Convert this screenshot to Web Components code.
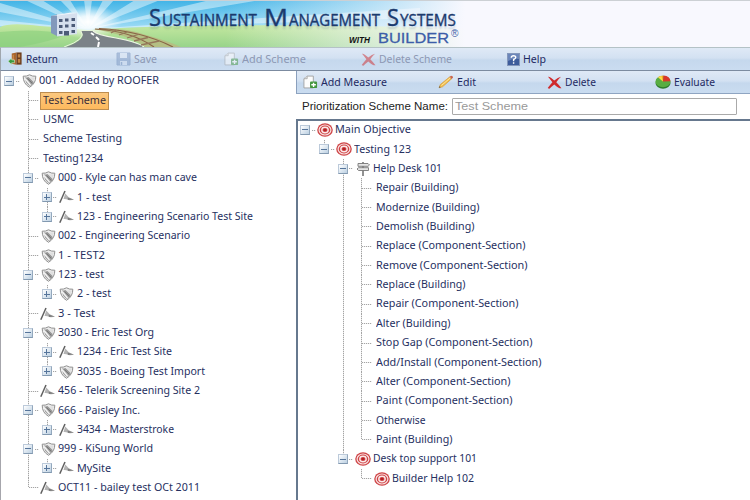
<!DOCTYPE html>
<html lang="en">
<head>
<meta charset="utf-8">
<title>Sustainment Management Systems</title>
<style>
html,body{margin:0;height:100%;overflow:hidden}
body{background:#fff;font-family:"Noto Sans","Open Sans",sans-serif;color:#26305f}
sms-app{--rh:19.37px}
</style>
</head>
<body>
<sms-app></sms-app>
<script>
const def=(name,html,init)=>customElements.define(name,class extends HTMLElement{
  connectedCallback(){
    if(this.shadowRoot)return;
    const t=document.createElement('template');
    t.innerHTML=typeof html==='function'?html(this):html;
    this.attachShadow({mode:'open'}).append(t.content.cloneNode(true));
    if(init)init(this);
  }
});

/* Single-line text scaled horizontally to the width given in w */
def('fit-text','<style>:host{display:block;white-space:pre;line-height:1.3}span{display:inline-block;transform-origin:0 50%}</style><span></span>',el=>{
  const s=el.shadowRoot.querySelector('span');
  s.textContent=el.getAttribute('t');
  const w=+el.getAttribute('w');
  el.style.width=w+'px';
  s.style.transform=`scaleX(${w/s.getBoundingClientRect().width})`;
});

const ICONS={
shield:'<svg width="15" height="14" viewBox="0 0 15 14"><path d="M1.2 2.2Q4.5 2.6 7.5.8Q10.5 2.6 13.8 2.2Q14 9.5 7.5 13.3Q1 9.5 1.2 2.2Z" fill="#ececec" stroke="#909090"/><path d="M3 3.600Q5 3.600 6.500 3L12 8.300Q10 11 7.500 12Q6 10.500 4 8.500Z" fill="#999"/><path d="M3 4.500L8.500 11" stroke="#f4f4f4" stroke-width="1.600"/><path d="M8 3.500L12 7.300L12.600 3.500Z" fill="#dedede"/><path d="M5.500 4.500L10.500 9.500" stroke="#777"/></svg>',
flag:'<svg width="16" height="14" viewBox="0 0 16 14"><path d="M6 1L.8 12.8" stroke="#606060" stroke-width="1.500"/><path d="M6.200 3.500Q8 5 9.500 7Q12 8.500 15 9.500Q12 10.800 9.500 10Q7 8.800 4.500 9Z" fill="#b4b4b4"/><path d="M8.500 7.500L14.800 9.600L9 9.900Z" fill="#7c7c7c"/></svg>',
target:'<svg width="16" height="14" viewBox="0 0 16 14"><ellipse cx="8" cy="7" rx="7.800" ry="6.800" fill="#cf4446"/><ellipse cx="8" cy="7" rx="5.900" ry="5" fill="none" stroke="#f8e2e2" stroke-width="1.200"/><ellipse cx="8" cy="7" rx="3.200" ry="2.700" fill="none" stroke="#fbeaea" stroke-width="1.400"/><ellipse cx="8" cy="7" rx="1.500" ry="1.300" fill="#b32226"/></svg>',
sign:'<svg width="14" height="14" viewBox="0 0 14 14"><path d="M7 0V14" stroke="#777" stroke-width="1.600"/><path d="M2 1.500H12L13.500 3L12 4.300H2ZM2.500 5.700H12.500V8.500H2.500L1 7Z" fill="#e6e6e6" stroke="#777" stroke-width=".9"/></svg>',
door:'<svg width="15" height="14" viewBox="0 0 16 14"><path d="M4 1L9 0V13L4 12Z" fill="#a9652c"/><path d="M9 0H14.500V13H9Z" fill="#6d3d1d"/><path d="M10.500 2H13V5.500H10.500ZM10.500 7H13V11H10.500Z" fill="#c18343"/><path d="M5.500 2.500V10.500" stroke="#d99a5a"/><path d="M0 9.500L4 6V8H7V11H4V13Z" fill="#3b9a3e" stroke="#e2f1df" stroke-width=".6"/></svg>',
save:'<svg width="15" height="14" viewBox="0 0 15 14"><path d="M1 1H14V13H1Z" fill="#7f9ac4" stroke="#6f8cba"/><path d="M4 1H11V6H4Z" fill="#dde7f4"/><path d="M4 9H11V13H4Z" fill="#d2def0"/><path d="M5.500 10V13" stroke="#6f8cba" stroke-width="1.500"/></svg>',
add:'<svg width="15" height="14" viewBox="0 0 16 14"><path d="M1 3.500L4.500.7H11V13.300H1Z" fill="#fcfcfc" stroke="#9a9a9a" stroke-width=".9"/><path d="M1 3.500H4.500V.7" fill="#ddd" stroke="#9a9a9a" stroke-width=".7"/><rect x="7.500" y="6.500" width="7.500" height="7" rx="1" fill="#43963e"/><path d="M11.250 7.800V12.300M8.800 10H13.700" stroke="#fff" stroke-width="1.500"/></svg>',
x:'<svg width="15" height="13" viewBox="0 0 15 13"><path d="M1 .8Q3 .4 7.3 4.600Q11 1.200 14 .8Q12 2.5 9.300 6.3Q12 9 14.500 12.300Q12 12.800 7.3 8.400Q4.500 10.5 2.500 12.800Q1.500 12.800 .7 12Q3 9 5.400 6.300Q3 3 1 .8Z" fill="#cf2a2c"/></svg>',
help:'<svg width="13" height="13" viewBox="0 0 13 13"><rect x=".5" y=".5" width="12" height="12" fill="#3d5c9b" stroke="#8497bb"/><path d="M1 1H12V6Q6 5 1 8Z" fill="#7f98c7" opacity=".7"/><path d="M4.300 4.700Q4.300 2.800 6.500 2.800Q8.900 2.800 8.700 4.700Q8.500 5.700 6.600 6.500V8.200M6.600 9.300V10.700" fill="none" stroke="#fff" stroke-width="1.400"/></svg>',
pencil:'<svg width="16" height="14" viewBox="0 0 16 14"><path d="M1 12.800L2.300 9.500L11.500 2L13.500 3.900L4.500 11.800Z" fill="#f2bf4b" stroke="#cf9236" stroke-width=".6"/><path d="M11.500 2L13 .8Q15.3.8 15 2.700L13.500 3.900Z" fill="#c8664d"/><path d="M3.400 10.500L12.300 2.900" stroke="#fbe3a0"/><path d="M1 12.800L1.600 11.200L2.700 12.200Z" fill="#444"/></svg>',
pie:'<svg width="16" height="14" viewBox="0 0 16 14"><ellipse cx="8" cy="8" rx="7.500" ry="5.700" fill="#2d7c2c"/><ellipse cx="8" cy="6.500" rx="7.500" ry="5.700" fill="#58ad42"/><path d="M8 6.500L3.300 2Q5.500.5 8.500.8Z" fill="#f4a51e"/><path d="M8 6.500L8.500.4Q15 1 15.500 6.300Z" fill="#d9362c"/><path d="M8 6.500L3 2.200Q4.800 1 6.500.9Z" fill="#f7dd4c"/></svg>'
};
def('ui-icon',el=>`<style>:host{display:flex;flex:none}svg{display:block}</style>${ICONS[el.getAttribute('name')]}`);

/* Branch of a tree: rail column with dotted connectors, optional toggle and icon, nested nodes in the slot */
def('tree-node',el=>{
  const tg=el.getAttribute('toggle'),ic=el.getAttribute('icon'),sel=el.hasAttribute('selected');
  return `<style>
  :host{display:grid;grid-template-columns:18.8px minmax(0,1fr);font-size:10.6px}
  .rail{grid-row:1/3;grid-column:1;display:flex;justify-content:center;padding-top:4.5px;box-sizing:border-box;
    background:repeating-linear-gradient(#a4a4a4 0 1px,#e6e6e6 1px 2px) 9px 0/1px 100% no-repeat}
  :host([last]) .rail{background-size:1px 9px}
  :host([root]) .rail{background:none}
  .box{width:10px;height:10px;box-sizing:border-box;border:1px solid #bccada;border-right-color:#93a8bd;border-bottom-color:#8299b0;background:linear-gradient(135deg,#fff,#bcd0e2);display:grid;place-items:center}
  .box i{grid-area:1/1;width:6px;height:1px;background:#56759b}.box i+i{width:1px;height:6px}
  .row{height:var(--rh);display:flex;align-items:center;margin-left:-9px}
  .h{flex:none;width:${tg?4:10}px;margin-left:${tg?6:0}px;height:1px;background:repeating-linear-gradient(90deg,#a4a4a4 0 1px,#eee 1px 2px)}
  .ic{width:19px;display:flex;justify-content:center;flex:none}
  .l{padding:1px 2px;border:1px solid transparent;margin-left:${ic?-2.5:1.3}px}
  .sel{background:linear-gradient(#fbc880,#fdb95d);border-color:#bd8d50;color:#3c3039}
  .kids{grid-column:2}
  </style><div class="rail">${tg?`<span class="box"><i></i>${tg==='+'?'<i></i>':''}</span>`:''}</div>
  <div class="row"><span class="h"></span>${ic?`<span class="ic"><ui-icon name="${ic}"></ui-icon></span>`:''}<div class="l ${sel?'sel':''}"><fit-text t="${el.getAttribute('t')}" w="${el.getAttribute('w')}"></fit-text></div></div>
  <div class="kids"><slot></slot></div>`;
});

def('tool-button',el=>`<style>
:host{display:flex;align-items:center;gap:3px;font-size:10.8px;color:#1f2a62}
:host([off]){color:#8d98b4}
:host([off]) ui-icon{opacity:.5}
</style><ui-icon name="${el.getAttribute('icon')}"></ui-icon><fit-text t="${el.getAttribute('t')}" w="${el.getAttribute('w')}"></fit-text>`);

def('tool-bar',`<style>:host{display:grid;align-items:center;box-sizing:border-box;background:linear-gradient(#dfe9f6,#d3e1f2 45%,#c5d8ed 55%,#cadcf0)}</style><slot></slot>`);

def('page-banner',`<style>
:host{display:grid;height:47px;overflow:hidden;background:#f8f8fe}
svg,.t{grid-area:1/1}
svg{display:block}
.t{display:flex;flex-direction:column;align-items:flex-start;padding:4px 0 0 149px;color:#1b3a6e;font-family:"Open Sans","Noto Sans",sans-serif}
.a{display:flex;align-items:baseline;height:26px;gap:7px;font-size:16px;-webkit-text-stroke:.35px #1b3a6e}
.a div{display:flex;align-items:baseline;gap:1px;text-shadow:0 3px 2px #1b3a6e30}
.a fit-text{line-height:17px}
.a .c{font-size:24px;line-height:26px}
.b{display:flex;align-items:baseline;padding-left:200px;gap:8px}
.w{font:italic bold 8.500px "Liberation Sans",sans-serif;color:#111}
.bu{font:15.500px "Liberation Sans",sans-serif;color:#3c5da8;line-height:16px;-webkit-text-stroke:.3px #3c5da8}
.r{font:10px/10px "Liberation Sans",sans-serif;color:#3c5da8;align-self:flex-start;margin-left:-6px;margin-top:-1px}
</style>
<svg width="750" height="47" viewBox="0 0 750 47">
<defs>
<linearGradient id="sky" x2="0" y2="1"><stop stop-color="#3fb3e6"/><stop offset=".6" stop-color="#9fdcf5"/><stop offset="1" stop-color="#e2f5fb"/></linearGradient>
<linearGradient id="gr" x2="0" y2="1"><stop stop-color="#c5e8a0"/><stop offset="1" stop-color="#98d48a"/></linearGradient>
<linearGradient id="fade"><stop offset=".3" stop-color="#f8f8fe" stop-opacity="0"/><stop offset=".62" stop-color="#f8f8fe"/></linearGradient>
<radialGradient id="glow"><stop stop-color="#fff"/><stop offset=".35" stop-color="#fff" stop-opacity=".85"/><stop offset="1" stop-color="#fff" stop-opacity="0"/></radialGradient>
</defs>
<rect width="750" height="47" fill="url(#sky)"/>
<g fill="#fff" opacity=".45"><path d="M88 29L0 3V12ZM88 29L0 20V26ZM88 29L25 0H42ZM88 29L60 0H70ZM88 29L84 0H92ZM88 29L103 0H114ZM88 29L135 0H160ZM88 29L210 0H260ZM88 29L420 8V18Z"/></g>
<path d="M0 27Q10 22 40 26Q60 27 88 30Q200 21 500 29V47H0Z" fill="url(#gr)"/>
<ellipse cx="88" cy="22" rx="34" ry="17" fill="url(#glow)"/>
<path d="M0 32Q35 28 68 34Q50 42 20 47H0Z" fill="#88cf7c" opacity=".6"/>
<path d="M81 31H93Q98 35 116 38Q138 42 143 47H66Q88 39 81 31Z" fill="#7b8288"/>
<path d="M81 31Q87 39 64 47" fill="none" stroke="#e9f3dc"/><path d="M93 31Q97 35 116 38Q138 42 144 47" fill="none" stroke="#eef5e4" stroke-width="1.200"/>
<path d="M91 33L94 35M96 37L99 40M99 42L98 47" stroke="#fff" stroke-width="2"/>
<path d="M93 29Q123 27 146 35Q168 41 181 47H145Q133 36 93 29Z" fill="#b4bf83"/>
<path d="M95 29Q131 31 154 47M99 28.500Q142 31 173 47" fill="none" stroke="#8a6446" stroke-width="1.200"/>
<path d="M111 33L116 30M119 35L127 32M127 38L138 34.500M134 41L148 37.500M141 45L159 41" stroke="#94775a" stroke-width="1.300"/>
<path d="M51 16L57 14.500V36L51 33Z" fill="#8299bb"/><path d="M57 14.500L77 13V34L57 36.500Z" fill="#d6e0ee"/><path d="M51 16L71 12.500L77 13L57 15.500Z" fill="#f3f7fb"/>
<g fill="#4c5b78"><path d="M59 19h3.500v3H59zM65 18.500h3.500v3H65zM71.500 18h3.500v3h-3.500zM59 25h3.500v3H59zM65 24.500h3.500v3H65zM71.500 24h3.500v3h-3.500zM59 31h3.500v3H59zM64 31h5v4.500h-5zM71.500 30h3.500v3h-3.500z"/></g>
<rect width="750" height="47" fill="url(#fade)"/>
<rect width="750" height="1" fill="#ccd0d4"/>
</svg>
<div class="t"><div class="a"><div><fit-text class="c" t="S" w="12"></fit-text><fit-text t="USTAINMENT" w="95"></fit-text></div><div><fit-text class="c" t="M" w="24"></fit-text><fit-text t="ANAGEMENT" w="91"></fit-text></div><div><fit-text class="c" t="S" w="12"></fit-text><fit-text t="YSTEMS" w="56"></fit-text></div></div>
<div class="b"><fit-text class="w" t="WITH" w="21"></fit-text><fit-text class="bu" t="BUILDER" w="71"></fit-text><fit-text class="r" t="®" w="7.500"></fit-text></div></div>`);

const n=(t,w,o='',kids='')=>`<tree-node t="${t}" w="${w}" ${o}>${kids}</tree-node>`;
const S='icon="shield"',F='icon="flag"',T='icon="target"',M='toggle="-"',P='toggle="+"',L='last';

def('scheme-tree',`<style>:host{display:block}</style>`+
n('001 - Added by ROOFER',120,`root ${S} ${M}`,
 n('Test Scheme',63,'selected')+n('USMC',31)+n('Scheme Testing',79)+n('Testing1234',60)+
 n('000 - Kyle can has man cave',139,`${S} ${M}`,n('1 - test',34,`${F} ${P}`)+n('123 - Engineering Scenario Test Site',176,`${F} ${P} ${L}`))+
 n('002 - Engineering Scenario',132,S)+n('1 - TEST2',47,S)+
 n('123 - test',46,`${S} ${M}`,n('2 - test',34,`${S} ${P} ${L}`))+
 n('3 - Test',37,F)+
 n('3030 - Eric Test Org',96,`${S} ${M}`,n('1234 - Eric Test Site',95,`${F} ${P}`)+n('3035 - Boeing Test Import',128,`${S} ${P} ${L}`))+
 n('456 - Telerik Screening Site 2',142,F)+
 n('666 - Paisley Inc.',82,`${S} ${M}`,n('3434 - Masterstroke',97,`${F} ${P} ${L}`))+
 n('999 - KiSung World',95,`${S} ${M}`,n('MySite',34,`${F} ${P} ${L}`))+
 n('OCT11 - bailey test OCt 2011',142,`${F} ${L}`)));

const leaves=[['Repair (Building)',82.5],['Modernize (Building)',103.5],['Demolish (Building)',98.5],['Replace (Component-Section)',149.5],['Remove (Component-Section)',151.5],['Replace (Building)',89.5],['Repair (Component-Section)',142.5],['Alter (Building)',74.5],['Stop Gap (Component-Section)',156.5],['Add/Install (Component-Section)',165.5],['Alter (Component-Section)',134.5],['Paint (Component-Section)',136.5],['Otherwise',49.5],['Paint (Building)',76.5]];
def('measure-tree',`<style>:host{display:block}</style>`+
n('Main Objective',76,`root ${T} ${M}`,
 n('Testing 123',57,`${T} ${M} ${L}`,
  n('Help Desk 101',69,`icon="sign" ${M}`,leaves.map((a,i)=>n(a[0],a[1],i===13?L:'')).join(''))+
  n('Desk top support 101',104,`${T} ${M} ${L}`,n('Builder Help 102',82,`${T} ${L}`)))));

def('sms-app',`<style>
:host{display:grid;grid-template-rows:47px 24px 1fr;height:500px;width:750px;overflow:hidden;box-sizing:border-box}
.main{grid-template-columns:108px 108px 137px 146px 1fr;padding-left:7px;border-top:1px solid #b4c2c6;border-bottom:1px solid #7c8ba0;border-left:1px solid #a0a6ad}
.cols{display:grid;grid-template-columns:295px 1fr;min-height:0;border-left:1px solid #a6a6ac}
scheme-tree{margin-left:-1px;padding-top:.6px}
.right{display:grid;grid-template-rows:23px 25px 1fr;min-width:0;min-height:0}
.sub{grid-template-columns:135px 108.500px 108px 1fr;padding-left:6px;border-left:1px solid #8ba0bd;border-bottom:1px solid #8fa5c2}
.name{display:flex;align-items:center;gap:4px;padding-left:6px;color:#222;font:10.500px "Liberation Sans",Arial,sans-serif}
.in{width:285px;height:17px;box-sizing:border-box;border:1px solid #aaa;border-radius:1px;padding:0 2px;display:flex;align-items:center;color:#999;font-size:11px}
.tree{border-left:2px solid #66788e;border-top:2px solid #66788e;overflow:hidden}
.tree measure-tree{margin-left:-2px;margin-top:-.6px}
</style>
<page-banner></page-banner>
<tool-bar class="main"><tool-button icon="door" t="Return" w="32"></tool-button><tool-button off icon="save" t="Save" w="23"></tool-button><tool-button off icon="add" t="Add Scheme" w="64"></tool-button><tool-button off icon="x" t="Delete Scheme" w="73"></tool-button><tool-button icon="help" t="Help" w="23"></tool-button></tool-bar>
<div class="cols"><scheme-tree></scheme-tree>
<div class="right"><tool-bar class="sub"><tool-button icon="add" t="Add Measure" w="66"></tool-button><tool-button icon="pencil" t="Edit" w="19"></tool-button><tool-button icon="x" t="Delete" w="31"></tool-button><tool-button icon="pie" t="Evaluate" w="41"></tool-button></tool-bar>
<div class="name"><fit-text t="Prioritization Scheme Name:" w="146"></fit-text><div class="in"><fit-text t="Test Scheme" w="73"></fit-text></div></div>
<div class="tree"><measure-tree></measure-tree></div></div></div>`);
</script>
</body>
</html>
